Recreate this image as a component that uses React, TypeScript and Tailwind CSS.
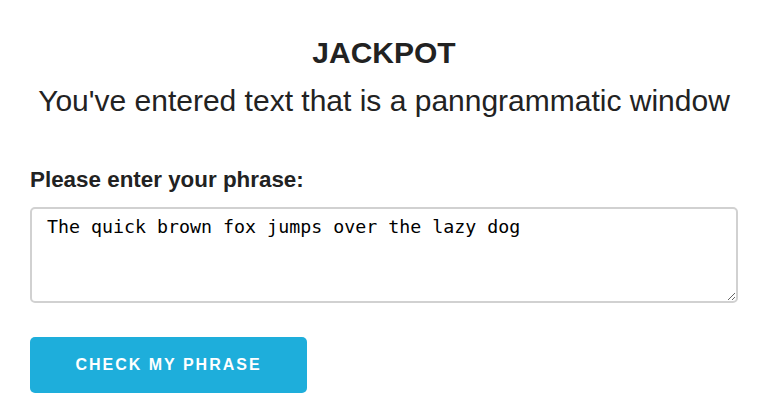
const App = () => {
    return (
        <div className="min-h-[416px] bg-white pl-[30px] pr-[25px] pt-[35px] text-[#222] font-['Liberation_Sans',Arial,sans-serif]">
            <h1 className="text-center font-bold text-[30px] leading-[36px]">JACKPOT</h1>
            <h2 className="text-center text-[30px] leading-[40px] mt-[10px] whitespace-nowrap">
                You've entered text that is a panngrammatic window
            </h2>

            <label className="block mt-[45px] font-bold text-[22.4px] leading-[28px]">
                Please enter your phrase:
            </label>
            <textarea
                className="block mt-[13px] w-full h-[96px] border-2 border-[#d1d1d1] rounded-[5px] px-[15px] py-[5px] font-['DejaVu_Sans_Mono',monospace] text-[18.3px] leading-[26px] text-black outline-none"
                defaultValue="The quick brown fox jumps over the lazy dog"
            />

            <button className="mt-[34px] w-[277px] h-[56px] rounded-[5px] bg-[#1eaedb] text-white font-bold text-[16px] tracking-[2px] uppercase">
                Check my phrase
            </button>
        </div>
    )
}

export default App
